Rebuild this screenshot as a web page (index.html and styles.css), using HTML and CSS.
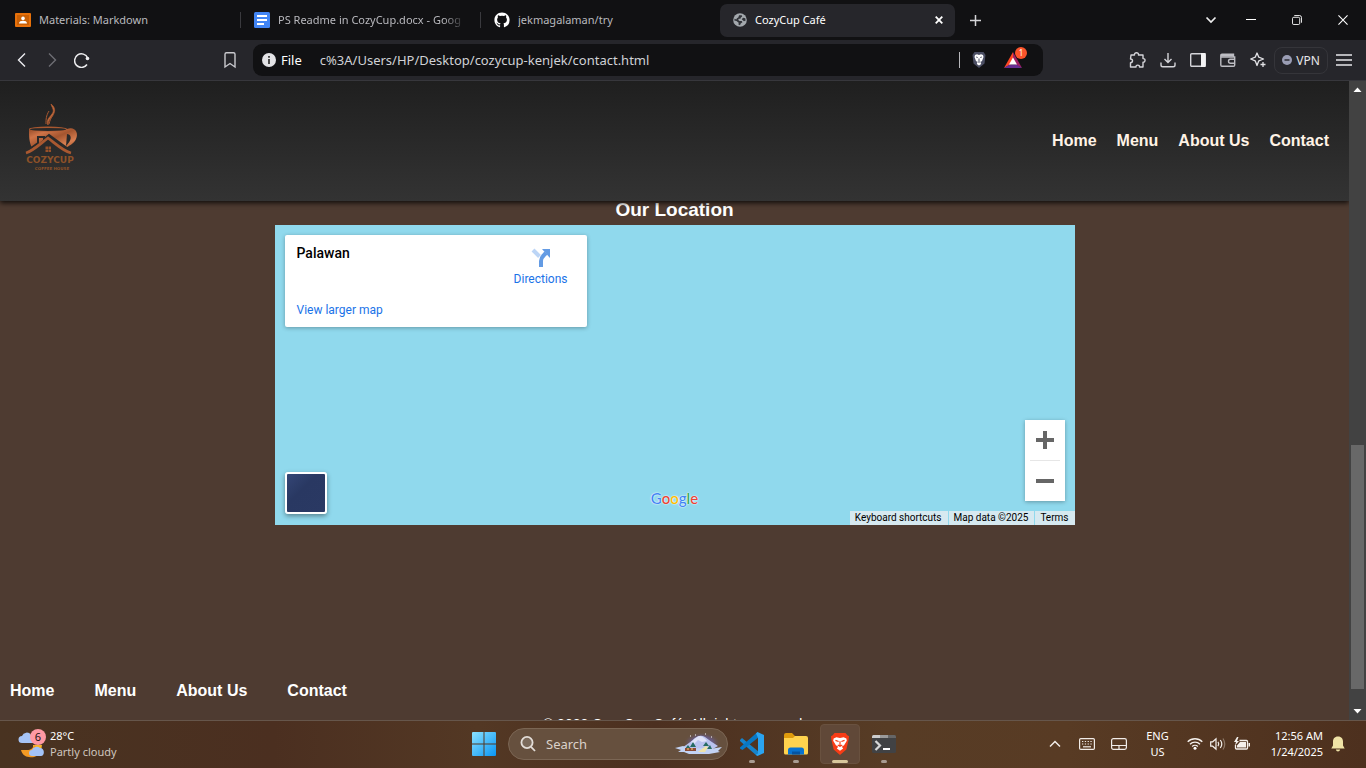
FILE: index.html
```html
<!DOCTYPE html>
<html lang="en">
<head>
<meta charset="utf-8">
<title>CozyCup Café</title>
<link rel="stylesheet" href="styles.css">
</head>
<body>
<div class="tabs">
  <button class="tab">
    <svg width="16" height="16" viewBox="0 0 16 16"><rect y="1" width="16" height="14" rx="1" fill="#e8710a"/><rect x="2" y="3" width="12" height="10" fill="#c96006"/><circle cx="8" cy="6.400" r="1.800" fill="#fff"/><path d="M4 11.500c0-2 2-2.700 4-2.700s4 .7 4 2.700z" fill="#fff"/></svg>
    <span class="tab-title">Materials: Markdown</span>
  </button>
  <button class="tab">
    <svg width="16" height="16" viewBox="0 0 16 16"><rect width="16" height="16" rx="1.500" fill="#4285f4"/><path d="M3 4h10M3 8h10M3 12h7" stroke="#fff" stroke-width="2"/></svg>
    <span class="tab-title fade">PS Readme in CozyCup.docx - Goog</span>
  </button>
  <button class="tab last">
    <svg width="16" height="16" viewBox="0 0 16 16" fill="#fff"><path d="M8 .5C3.600.5.400 3.900.400 8c0 3.400 2.200 6.200 5.200 7.200.4.100.5-.2.500-.4v-1.500c-2.100.5-2.600-.9-2.600-.9-.3-.9-.8-1.100-.8-1.100-.7-.5 0-.5 0-.5.8.1 1.200.8 1.200.8.700 1.200 1.800.8 2.200.7.100-.5.300-.9.500-1.100-1.700-.2-3.500-.9-3.500-3.800 0-.8.300-1.500.8-2-.1-.2-.3-1 .1-2.100 0 0 .6-.2 2.100.8a7 7 0 0 1 3.800 0c1.400-1 2.100-.8 2.100-.8.4 1.100.1 1.900.1 2.100.5.500.8 1.200.8 2 0 2.900-1.800 3.600-3.500 3.800.3.200.5.700.5 1.400v2.200c0 .2.100.500.5.4A7.600 7.600 0 0 0 15.600 8C15.600 3.900 12.400.5 8 .5z"/></svg>
    <span class="tab-title">jekmagalaman/try</span>
  </button>
  <button class="tab active">
    <svg width="14" height="14" viewBox="0 0 16 16"><circle cx="8" cy="8" r="7.800" fill="#a3a8ad"/><path d="M7 2.500h3l.5 1.500-1.500 1-.5 1.500H6.500L6 8l1.500 1H10l.8 1.500-2 1.500-.8 2-1.800-.8.300-2.200-2.500-2L1.500 8.500l.3-1.800 2 .8L4.500 6 6 5z" fill="#303238"/><path d="M10 7l1.500-1.500L14 6l.5 2.500-2 1z" fill="#303238"/></svg>
    <span class="tab-title">CozyCup Café</span>
    <svg width="8" height="8" viewBox="0 0 8 8" fill="none" stroke="#fff" stroke-width="1.800"><path d="M.7.700l6.600 6.600M7.300.700L.7 7.300"/></svg>
  </button>
  <button class="new-tab" aria-label="New tab"><svg width="11" height="11" viewBox="0 0 11 11" stroke="#d5d5d8" stroke-width="1.500"><path d="M5.500 0v11M0 5.500h11"/></svg></button>
  <div class="window-controls">
    <button aria-label="Search tabs"><svg width="12" height="8" viewBox="0 0 12 8" fill="none" stroke="#eee" stroke-width="1.700"><path d="M1.500 1.500L6 6l4.500-4.500"/></svg></button>
    <button aria-label="Minimize"><svg width="10" height="10" viewBox="0 0 10 10"><path d="M0 4.500h10" stroke="#fff"/></svg></button>
    <button aria-label="Restore"><svg width="10" height="10" viewBox="0 0 11 11" fill="none" stroke="#fff"><rect x=".5" y="2.500" width="8" height="8" rx="1.500"/><path d="M2.500.5H8a2.500 2.500 0 0 1 2.500 2.500v5.500"/></svg></button>
    <button aria-label="Close"><svg width="10" height="10" viewBox="0 0 11 11" stroke="#fff" stroke-width="1.200"><path d="M.5.500l10 10M10.500.500l-10 10"/></svg></button>
  </div>
</div>

<div class="toolbar">
  <div class="nav-buttons">
    <button aria-label="Back"><svg width="16" height="16" viewBox="0 0 16 16" fill="none" stroke="#ececef" stroke-width="1.400"><path d="M11 1.500L4.500 8l6.500 6.500"/></svg></button>
    <button aria-label="Forward"><svg width="16" height="16" viewBox="0 0 16 16" fill="none" stroke="#6e6e74" stroke-width="1.400"><path d="M5 1.500L11.500 8 5 14.500"/></svg></button>
    <button aria-label="Reload"><svg width="16" height="16" viewBox="0 0 16 16" fill="none" stroke="#ececef" stroke-width="1.500"><path d="M13.700 6A6.800 6.800 0 1 0 13 12.500"/><circle cx="13.500" cy="6.500" r="1.800" fill="#ececef" stroke="none"/></svg></button>
    <button class="bookmark" aria-label="Bookmark"><svg width="16" height="18" viewBox="0 0 16 18" fill="none" stroke="#c9c9ce" stroke-width="1.400"><path d="M3 3.200q0-1.500 1.500-1.500h7q1.500 0 1.500 1.500V16l-5-3.500L3 16z"/></svg></button>
  </div>
  <div class="address">
    <svg width="14" height="14" viewBox="0 0 14 14"><circle cx="7" cy="7" r="7" fill="#e3e3e6"/><path d="M7 6v5M7 3v1.800" stroke="#222" stroke-width="1.600"/></svg>
    <span class="scheme">File</span>
    <input class="url" type="text" aria-label="Address" value="c%3A/Users/HP/Desktop/cozycup-kenjek/contact.html">
    <span class="divider"></span>
    <button aria-label="Shields"><svg width="16" height="18" viewBox="0 0 16 18"><path d="M3.500 1h9l2 3-1 8.500L8 17l-5.500-4.500L1.500 4z" fill="#4b4e63"/><path d="M4 4l2-.8L8 4l2-.8 2 .8.500 2-1.500 4-1.500 1 .7 2L8 14.500 5.800 13l.7-2L5 10 3.500 6z" fill="#fff"/><path d="M5.200 6l1.500.5M10.800 6l-1.500.5M8 7.500v2.500M6.800 10.500L8 11.300l1.200-.8" stroke="#4b4e63" fill="none"/></svg></button>
    <button class="rewards" aria-label="Rewards"><svg width="18" height="16" viewBox="0 0 18 16"><path d="M9 0L0 16l9-5z" fill="#ff4724"/><path d="M9 0l9 16-9-5z" fill="#9e1f63"/><path d="M0 16h18l-5.500-3.500h-7z" fill="#662d91"/><path d="M9 5.500l4 7H5z" fill="#fff"/></svg><span class="count">1</span></button>
  </div>
  <div class="actions">
    <button aria-label="Extensions"><svg width="18" height="18" viewBox="0 0 18 18" fill="none" stroke="#d4d4d9" stroke-width="1.400"><path d="M3 4h3.500c-.5-3 4.500-3 4 0H15v3.600c2.700-.3 2.700 3.800 0 3.600V16h-3.500c.2-2.500-3.800-2.500-3.500 0H2.500v-4.300c2.700 0 2.700-3.700 0-3.700z" transform="translate(-1 0)" stroke-linejoin="round"/></svg></button>
    <button aria-label="Downloads"><svg width="16" height="16" viewBox="0 0 16 16" fill="none" stroke="#d4d4d9" stroke-width="1.400"><path d="M8 1v9M4.500 7L8 10.500 11.500 7M1 10.500V13q0 1.800 1.800 1.800h10.400q1.800 0 1.800-1.800v-2.500"/></svg></button>
    <button aria-label="Sidebar"><svg width="16" height="16" viewBox="0 0 16 16"><rect x=".7" y="1.700" width="14.600" height="12.600" rx="1" fill="none" stroke="#d4d4d9" stroke-width="1.400"/><path d="M11 1h4.500v14H11z" fill="#f2f2f4"/></svg></button>
    <button aria-label="Wallet"><svg width="16" height="16" viewBox="0 0 16 16" fill="none" stroke="#bdbdc3" stroke-width="1.400"><path d="M13.500 5V2.200H2Q.8 2.200.8 3.500V13q0 1.200 1.200 1.200h11.500q1.200 0 1.200-1.200V5H1M15 7.300H10.500a2 2 0 0 0 0 4H15"/><path d="M1 3.500h12" stroke-width="2"/></svg></button>
    <button aria-label="Leo AI"><svg width="16" height="16" viewBox="0 0 16 16" fill="none" stroke="#e2e2e6" stroke-width="1.300" stroke-linejoin="round"><path d="M7 1l1.800 4.200L13.500 7 8.800 8.800 7 13.500 5.200 8.800.7 7l4.500-1.800z"/><path d="M13 10v5M10.500 12.500h5"/></svg></button>
    <button class="vpn"><svg width="10" height="10" viewBox="0 0 10 10"><circle cx="5" cy="5" r="5" fill="#9a9db4"/><path d="M2.500 5h5" stroke="#24242a" stroke-width="1.400"/></svg>VPN</button>
    <button aria-label="Menu"><svg width="16" height="12" viewBox="0 0 16 12" stroke="#e6e6ea" stroke-width="1.300"><path d="M0 1h16M0 6h16M0 11h16"/></svg></button>
  </div>
</div>

<div class="viewport">
  <div class="page">
    <header class="site-header">
      <svg class="logo" width="60" height="72" viewBox="0 0 60 72" role="img" aria-label="CozyCup Coffee House">
        <defs><linearGradient id="copper" x1="0" y1="0" x2="1" y2="1"><stop offset="0" stop-color="#8f4826"/><stop offset=".25" stop-color="#cf7448"/><stop offset=".5" stop-color="#a4552f"/><stop offset=".75" stop-color="#d87e50"/><stop offset="1" stop-color="#94491f"/></linearGradient></defs>
        <path d="M31 2c1 4 4 6 1 10s-6 6-4 11c0-5 3-7 5-10s3-7-2-11z" fill="#c87044" stroke="#a95830" stroke-width=".8"/>
        <path d="M29 9c-3 5-3 8-3 13M33 13c-2 3-3 5-4 9" fill="none" stroke="#a95830"/>
        <path d="M9 27h38c8-3 12 4 9 10-2 5-8 7-10 9L29 33 17 43l-4 4C9 42 9 34 9 27z" fill="url(#copper)"/>
        <ellipse cx="28" cy="27" rx="19" ry="2.500" fill="#a95830"/>
        <ellipse cx="28" cy="27.400" rx="18" ry="1.500" fill="#292929"/>
        <path d="M47 32c6 1 4 7-1 12z" fill="#292929"/>
        <path d="M11 46l7-5v-6h6v2l5-4 18 13" fill="none" stroke="#292929" stroke-width="2"/>
        <path d="M6 51c7-2 14-9 22-15 8 6 15 13 23 15" fill="none" stroke="#a95830" stroke-width="2.800"/>
        <path d="M25.500 44.500H28V47h-2.500zM28.500 44.500H31V47h-2.500zM25.500 47.500H28V50h-2.500zM28.500 47.500H31V50h-2.500z" fill="#985028"/>
        <text x="30" y="61" class="logo-name">COZYCUP</text>
        <text x="32" y="68" class="logo-tag">COFFEE HOUSE</text>
      </svg>
      <nav class="top-nav"><a href="#">Home</a><a href="#">Menu</a><a href="#">About Us</a><a href="#">Contact</a></nav>
    </header>
    <main class="location">
      <h3>Our Location</h3>
      <div class="map">
        <div class="place-card">
          <div class="place"><strong>Palawan</strong><a href="#">View larger map</a></div>
          <a class="directions" href="#">
            <svg width="20" height="20" viewBox="0 0 20 20"><path d="M2 3l6.500 6.500" stroke="#bcd5f6" stroke-width="4"/><path d="M10 20v-6c0-4 2-5 5-8" fill="none" stroke="#639be4" stroke-width="4"/><path d="M11 2h8v9z" fill="#639be4"/></svg>
            Directions
          </a>
        </div>
        <button class="satellite" aria-label="Show satellite imagery"></button>
        <div class="google"><span class="b">G</span><span class="r">o</span><span class="y">o</span><span class="b">g</span><span class="g">l</span><span class="r">e</span></div>
        <div class="zoom">
          <button aria-label="Zoom in"><svg width="18" height="18" viewBox="0 0 18 18" stroke="#666" stroke-width="4"><path d="M9 0v18M0 9h18"/></svg></button>
          <button aria-label="Zoom out"><svg width="18" height="18" viewBox="0 0 18 18" stroke="#666" stroke-width="4"><path d="M0 9h18"/></svg></button>
        </div>
        <div class="map-legal"><button>Keyboard shortcuts</button><span>Map data ©2025</span><a href="#">Terms</a></div>
      </div>
    </main>
    <footer class="site-footer">
      <nav><a href="#">Home</a><a href="#">Menu</a><a href="#">About Us</a><a href="#">Contact</a></nav>
      <p>© 2023 CozyCup Café. All rights reserved.</p>
    </footer>
  </div>
  <div class="scrollbar">
    <svg class="arrow" viewBox="0 0 17 17"><path d="M4.500 11L8.500 6.500l4 4.500z" fill="#fff"/></svg>
    <div class="track"><div class="thumb"></div></div>
    <svg class="arrow" viewBox="0 0 17 17"><path d="M4.500 6l4 4.500 4-4.500z" fill="#fff"/></svg>
  </div>
</div>

<div class="taskbar">
  <button class="weather">
    <span class="weather-icon">
      <svg width="28" height="30" viewBox="0 0 28 30"><path d="M15 16h9l-1 6h-8z" fill="#f7b42c"/><path d="M3 21h6c4 0 6-2 7-5l6 6c-2 6-7 7-11 6-4 0-7-3-8-7z" fill="#f49a24"/><path d="M4 14a3.500 3.500 0 0 1 0-7 5 5 0 0 1 9-1c3 0 4 3 4 8z" fill="#a6c4f6"/><path d="M14 27a3 3 0 0 1 0-6 5 5 0 0 1 8-2c5 0 5 8 1 8z" fill="#a3c3f8"/></svg>
      <span class="badge">6</span>
    </span>
    <span class="weather-text"><span>28°C</span><span class="muted">Partly cloudy</span></span>
  </button>
  <div class="apps">
    <button class="app" aria-label="Start"><svg width="24" height="24" viewBox="0 0 24 24"><defs><linearGradient id="win" x1="0" y1="0" x2="1" y2="1"><stop stop-color="#8be2ff"/><stop offset="1" stop-color="#0895f4"/></linearGradient></defs><path d="M0 1q0-1 1-1h10.500v11.500H0zM12.500 0H23q1 0 1 1v10.500H12.500zM0 12.500h11.500V24H1q-1 0-1-1zM12.500 12.500H24V23q0 1-1 1H12.500z" fill="url(#win)"/></svg></button>
    <label class="search">
      <svg width="16" height="16" viewBox="0 0 16 16" fill="none" stroke="#e3ddd8" stroke-width="1.800"><circle cx="7" cy="6.500" r="5.600" fill="#7b6a5b"/><path d="M11 10.800l4 4.200"/></svg>
      <input type="text" placeholder="Search" aria-label="Search">
      <svg width="48" height="24" viewBox="0 0 48 24"><defs><radialGradient id="dusk"><stop stop-color="#7568a8"/><stop offset=".6" stop-color="#685a7c"/><stop offset="1" stop-color="#66503e" stop-opacity="0"/></radialGradient></defs><ellipse cx="27" cy="11" rx="19" ry="11" fill="url(#dusk)"/><path d="M8 15q8-5 12-9 5-4 10-1 5 4 13 9l-7 4H13z" fill="#b9c2ee"/><path d="M16 10q4-4 8-6 4 0 8 5l-5 1-4-2-4 4z" fill="#e0e2f8"/><path d="M0 16l8-2 6 3 13-1 8 1 12-2-4 4 2 1-11 2H14l-5-2H3l3-2z" fill="#c3d3f4"/><path d="M10 17l3-4 3 4zM15 15l3-5 3 5zM28 14l3-4 3 4zM32 17l3-4 2 4z" fill="#266a63"/><path d="M10 16h11v3H10z" fill="#8b4b35"/><path d="M12 17h2M16 17h2" stroke="#ffd37a" stroke-width="1"/><path d="M23 20l8-6 2 1-3 5z" fill="#eee3a8"/><path d="M15 4h1M20 3h1M30 2h1M36 5h1" stroke="#fff"/></svg>
    </label>
    <button class="app running" aria-label="Visual Studio Code"><svg width="24" height="24" viewBox="0 0 24 24"><path d="M0 8l2-2 17 14-2 4L0 9z" fill="#1684cc"/><path d="M0 15.500L17.500 0l1.500 5L2.500 18 0 16.500z" fill="#0878c4"/><path d="M17.500 0L24 3v18l-6.500 3-1.500-1.500 2-1V6L16 1.500z" fill="#2ba4f0"/></svg></button>
    <button class="app running" aria-label="File Explorer"><svg width="24" height="24" viewBox="0 0 24 24"><path d="M0 3q0-2 2-2h6l3 3h11v8H0z" fill="#df9b0c"/><path d="M0 6h9l2-2h11q2 0 2 2v15q0 1.500-1.500 1.500h-21Q0 22.500 0 21z" fill="#ffd34e"/><path d="M4 22.500V18q0-2.500 2.500-2.500h11Q20 15.500 20 18v4.500z" fill="#0873cf"/><path d="M8 22.500v-3h8v3z" fill="#0654a0"/></svg></button>
    <button class="app running current" aria-label="Brave"><svg width="20" height="24" viewBox="0 0 22 24"><path d="M5 0h12l2 2.500 2 1-.5 3.500L18 18l-7 6-7-6L1.500 7 1 3.500l2-1z" fill="#f83c16"/><path d="M4 6l3-1.500 4 1 4-1L18 6l.5 2.500-3 5-2.500 1.500 1.500 2L11 19.500 7.500 17 9 15l-2.500-1.500-3-5z" fill="#fff"/><path d="M6 8l3.500 1.200M16 8l-3.500 1.200M11 9v5M8.500 13l2.500 1.500 2.500-1.500" fill="none" stroke="#f83c16" stroke-width="1.300"/></svg></button>
    <button class="app running" aria-label="Terminal"><svg width="24" height="20" viewBox="0 0 24 20"><rect y="1" width="24" height="18" rx="1.500" fill="#414244"/><path d="M0 4V2.500Q0 1 1.500 1H8v3z" fill="#ccc"/><path d="M8 1h8v3H8z" fill="#9a9a9a"/><path d="M16 1h6.500Q24 1 24 2.500V4h-8z" fill="#666"/><path d="M3.500 7l4.500 4.500L3.500 16" fill="none" stroke="#d8d8d8" stroke-width="2.200"/><path d="M11 15h7" stroke="#fff" stroke-width="2"/></svg></button>
  </div>
  <div class="tray">
    <button aria-label="Hidden icons"><svg width="12" height="8" viewBox="0 0 12 8" fill="none" stroke="#f1ece8" stroke-width="1.500"><path d="M1 6.500l5-5 5 5"/></svg></button>
    <button aria-label="Touch keyboard"><svg width="16" height="12" viewBox="0 0 16 12" fill="none" stroke="#f1ece8" stroke-width="1.200"><rect x=".6" y=".6" width="14.800" height="10.800" rx="1.200"/><path d="M3 3.500h10" stroke-dasharray="1.300 1.500"/><path d="M3 6h10" stroke-dasharray="1.300 1.500"/><path d="M4 8.800h8"/></svg></button>
    <button aria-label="Touchpad"><svg width="16" height="12" viewBox="0 0 16 12" fill="none" stroke="#f1ece8" stroke-width="1.200"><rect x=".6" y=".6" width="14.800" height="10.800" rx="1.800"/><path d="M1 7.500h14M8 7.500V11"/></svg></button>
    <button class="lang"><span>ENG</span><span>US</span></button>
    <button class="status" aria-label="Network, volume, battery">
      <svg width="16" height="13" viewBox="0 0 16 13" fill="none" stroke="#f5f1ed" stroke-width="1.300"><path d="M.7 4.700a10.500 10.500 0 0 1 14.600 0M3 7.200a7 7 0 0 1 10 0M5.200 9.500a4 4 0 0 1 5.600 0"/><circle cx="8" cy="11.300" r="1.500" fill="#fff" stroke="none"/></svg>
      <svg width="16" height="14" viewBox="0 0 16 14" fill="none" stroke="#f5f1ed" stroke-width="1.200"><path d="M.7 4.800h2L6 1.800v10.400L2.700 9.200h-2z"/><path d="M8 4.800q1.500 2.200 0 4.400M10.300 3q3 4 0 8"/><path d="M13 1.500q3.500 5.500 0 11" stroke="#8d7867"/></svg>
      <svg width="18" height="14" viewBox="0 0 18 14"><path d="M6.500 3.500h7q1 0 1 1v6.500q0 1-1 1h-10q-1 0-1-1V8" fill="none" stroke="#f5f1ed" stroke-width="1.300"/><path d="M4 8.500l3-3.500h6v5.500H4zM15.500 6H17v3.500h-1.500zM4 0L1 5h2l-1 3.500L6 4H4l1.500-4z" fill="#f5f1ed"/></svg>
    </button>
    <button class="clock"><span>12:56 AM</span><span>1/24/2025</span></button>
    <button class="bell" aria-label="Notifications"><svg width="14" height="16" viewBox="0 0 14 16" fill="#f0e3a6"><path d="M7 .5c3.500 0 5 2.500 5 5v4l1.700 3H.3L2 9.500v-4c0-2.500 1.500-5 5-5zM4.800 13.500h4.400q-.5 2-2.200 2t-2.200-2z"/></svg></button>
  </div>
</div>
</body>
</html>
```
FILE: styles.css
```css
* { box-sizing: border-box; }
body {
  margin: 0;
  height: 100vh;
  display: flex;
  flex-direction: column;
  overflow: hidden;
  background: #4e3b31;
  font-family: "Noto Sans", "Open Sans", sans-serif;
  font-size: 12px;
  color: #fff;
}
button { border: 0; padding: 0; margin: 0; background: none; color: inherit; font: inherit; display: flex; align-items: center; justify-content: center; }
a { color: inherit; text-decoration: none; }
svg { display: block; flex: none; }

/* Tab strip */
.tabs { display: flex; align-items: center; flex: none; height: 40px; background: #111113; }
.tab { flex: 0 1 240px; min-width: 0; height: 16px; gap: 8px; padding: 0 10px 0 13px; justify-content: flex-start; border-right: 1px solid #3a3a3e; color: #b9b9be; font-size: 11px; }
.tab:first-child { flex-basis: 241px; padding-left: 15px; }
.tab.last { border-color: transparent; }
.tab-title { flex: 1; min-width: 0; overflow: hidden; white-space: nowrap; text-align: left; line-height: 16px; }
.fade { -webkit-mask-image: linear-gradient(90deg, #000 86%, transparent 98%); mask-image: linear-gradient(90deg, #000 86%, transparent 98%); }
.tab.last { flex-basis: 239px; }
.tab.active { flex-basis: 235px; height: 33px; padding: 0 12px 0 13px; border: 0; border-radius: 7px; background: #26262b; color: #fff; }
.new-tab { width: 41px; height: 40px; }
.window-controls { display: flex; margin-left: auto; }
.window-controls button { width: 46px; height: 40px; }
.window-controls button:first-child { width: 34px; }

/* Toolbar */
.toolbar { display: flex; align-items: center; flex: none; height: 41px; background: #26262b; border-bottom: 1px solid #37373c; }
.nav-buttons { display: flex; width: 253px; flex: none; padding-left: 7px; }
.nav-buttons button { width: 30px; height: 30px; }
.nav-buttons .bookmark { margin-left: auto; margin-right: 8px; }
.address { display: flex; align-items: center; flex: 1; min-width: 0; height: 32px; padding: 0 21px 0 9px; border-radius: 9px; background: #111113; font-size: 13px; }
.scheme { margin: 0 18px 0 5px; }
.url { flex: 1; min-width: 0; border: 0; padding: 0; background: none; color: #d0d1d6; font: inherit; }
.divider { width: 1px; height: 16px; margin-right: 11px; background: #b7b7bb; }
.rewards { position: relative; margin-left: 17px; }
.count { position: absolute; right: -5px; top: -5px; width: 12px; height: 12px; border-radius: 50%; background: #fb542b; font-size: 8px; line-height: 12px; text-align: center; }
.actions { display: flex; align-items: center; width: 323px; flex: none; justify-content: flex-end; padding-right: 7px; }
.actions button { width: 30px; height: 30px; }
.actions .vpn { width: 54px; height: 27px; margin: 0 1px; gap: 4px; border: 1px solid #35353a; border-radius: 8px; font-size: 12px; color: #e6e6ea; }

/* Web page */
.viewport { display: flex; flex: 1; min-height: 0; font-family: "Liberation Sans", Arial, sans-serif; }
.page { flex: 1; min-width: 0; display: flex; flex-direction: column; overflow: hidden; }
.site-header { position: relative; z-index: 1; display: flex; align-items: center; justify-content: space-between; flex: none; height: 120px; padding: 0 20px; background: linear-gradient(#1f1f1f, #333); box-shadow: 0 2px 5px rgba(0, 0, 0, .8); }
.logo { margin-bottom: 7px; }
.logo-name { font: bold 9px "DejaVu Sans", sans-serif; fill: #8d5128; text-anchor: middle; }
.logo-tag { font: bold 4px "DejaVu Sans", sans-serif; fill: #8d5128; text-anchor: middle; }
.top-nav { display: flex; gap: 20px; font-size: 16px; font-weight: bold; color: #fff3e6; }
.location { flex: 1; display: flex; flex-direction: column; align-items: center; }
.location h3 { margin: 0 0 6px; font-size: 19px; line-height: 18px; }
.map { position: relative; width: 100%; max-width: 800px; height: 300px; background: #90d9ed; font-family: Roboto, sans-serif; }
.place-card { position: absolute; left: 10px; top: 10px; display: flex; justify-content: space-between; width: 302px; height: 92px; padding: 10px 19px 9px 12px; border-radius: 2px; background: #fff; box-shadow: 0 1px 4px rgba(0, 0, 0, .3); color: #1a73e8; }
.place { display: flex; flex-direction: column; justify-content: space-between; line-height: 16px; }
.place strong { font-size: 14px; font-weight: 500; color: #000; }
.directions { display: flex; flex-direction: column; align-items: center; gap: 4px; padding-top: 2px; line-height: 16px; }
.satellite { position: absolute; left: 10px; bottom: 11px; width: 42px; height: 42px; border: 2px solid #fff; border-radius: 3px; background: linear-gradient(135deg, #344676, #293862 40%, #2a3963); box-shadow: 0 2px 5px rgba(0, 0, 0, .4); }
.google { position: absolute; left: 0; right: 0; bottom: 17px; text-align: center; font: 500 15px/20px Lato, sans-serif; text-shadow: 0 0 1px #fff, 0 0 2px #fff; -webkit-text-stroke: 0; }
.b { color: #4285f4; }
.r { color: #ea4335; }
.y { color: #fbbc04; }
.g { color: #34a853; }
.zoom { position: absolute; right: 10px; bottom: 24px; width: 40px; padding: 0 5px; background: #fff; box-shadow: 0 1px 4px rgba(0, 0, 0, .3); }
.zoom button { width: 30px; height: 40px; }
.zoom button + button { height: 41px; border-top: 1px solid #e6e6e6; }
.map-legal { position: absolute; right: 0; bottom: 0; display: flex; gap: 1px; font-size: 10px; line-height: 14px; color: #000; }
.map-legal > * { padding: 0 6px 0 5px; background: #d6e9f0; }
.site-footer { flex: none; height: 48px; font-size: 14px; }
.site-footer nav { display: flex; gap: 40px; padding: 9px 10px 0; font-size: 16px; line-height: 20px; font-weight: bold; }
.site-footer p { margin: 15px 0 0; line-height: 16px; text-align: center; }
.scrollbar { display: flex; flex-direction: column; width: 17px; flex: none; background: #424242; }
.arrow { width: 17px; height: 17px; }
.track { flex: 1; display: flex; flex-direction: column; align-items: center; }
.track::before { content: ""; flex: 347; }
.track::after { content: ""; flex: 14; }
.thumb { flex: 244; width: 13px; background: #686868; }

/* Taskbar */
.taskbar { display: grid; grid-template-columns: 1fr auto 1fr; align-items: center; flex: none; height: 48px; padding-bottom: 2px; border-top: 1px solid #66564b; background: linear-gradient(90deg, #493321, #4b2f20 20%, #533824 35%, #4c3020 48%, #573c25 65%, #583b24 78%, #4d301e); line-height: 16px; font-size: 11px; }
.weather { justify-self: start; gap: 4px; padding-left: 18px; }
.weather-icon { position: relative; }
.badge { position: absolute; left: 12px; top: 0; width: 16px; height: 16px; border-radius: 50%; background: #ff99a4; color: #201010; text-align: center; }
.weather-text, .lang, .clock { display: flex; flex-direction: column; }
.weather-text { align-items: flex-start; }
.muted { color: #cfc6bf; }
.apps { display: flex; align-items: center; gap: 4px; padding-left: 2px; }
.app { position: relative; width: 40px; height: 40px; border-radius: 4px; }
.running::after { content: ""; position: absolute; left: 17px; bottom: 1px; width: 6px; height: 3px; border-radius: 2px; background: #a99c92; }
.current { background: #604838; border: 1px solid #69513f; }
.current::after { left: 11px; bottom: 0; width: 16px; background: #d8c79c; }
.search { display: flex; align-items: center; gap: 10px; width: 220px; height: 32px; padding: 0 4px 0 11px; border: 1px solid #7b6654; border-radius: 16px; background: #66503e; }
.search input { flex: 1; min-width: 0; border: 0; padding: 0; background: none; color: #fff; font: 13px "Noto Sans", sans-serif; }
.search input::placeholder { color: #dbd2ca; opacity: 1; }
.tray { justify-self: end; display: flex; align-items: center; padding-right: 21px; }
.tray > button { min-width: 32px; height: 40px; }
.tray .lang { width: 45px; }
.tray .status { gap: 7px; width: 77px; }
.tray .clock { align-items: flex-end; width: 66px; }
.tray .bell { min-width: 14px; margin-left: 8px; }
```
